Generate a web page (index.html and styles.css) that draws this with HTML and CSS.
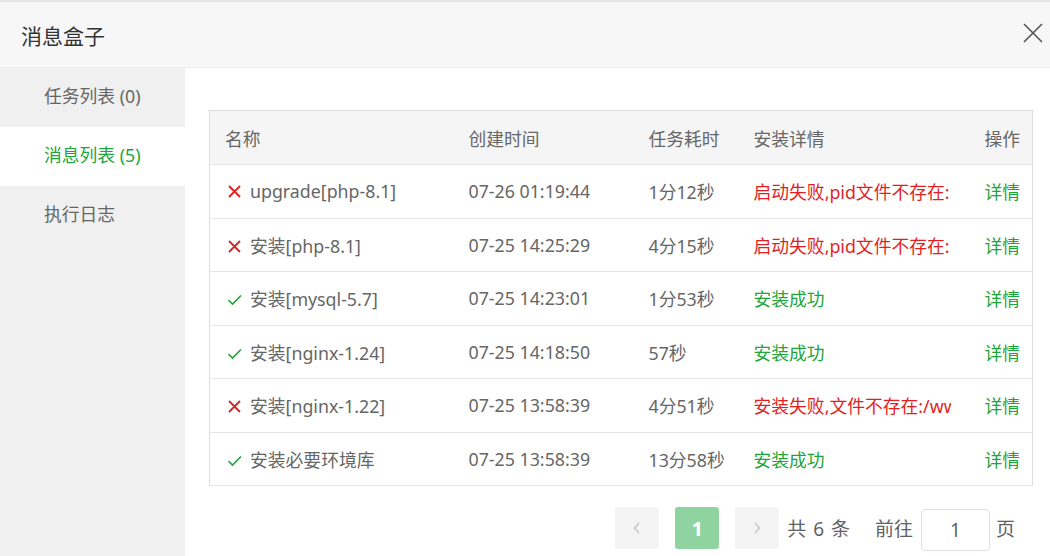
FILE: index.html
```html
<!doctype html>
<html lang="zh-CN">
    <head>
        <meta charset="UTF-8" />
        <meta name="viewport" content="width=device-width, initial-scale=1.0" />
        <title>消息盒子</title>
        <link rel="stylesheet" href="styles.css">
    </head>
    <body>
        <div class="dialog">
            <div class="header">
                <span class="title">消息盒子</span>
                <span class="close">
                    <svg width="20" height="20" viewBox="0 0 20 20"><path d="M1 1 L19 19 M19 1 L1 19" stroke="#555" stroke-width="1.6" fill="none"/></svg>
                </span>
            </div>
            <div class="main">
                <ul class="side">
                    <li>任务列表 (0)</li>
                    <li class="active">消息列表 (5)</li>
                    <li>执行日志</li>
                </ul>
                <div class="content">
                    <table class="list">
                        <colgroup>
                            <col style="width: 244px">
                            <col style="width: 180px">
                            <col style="width: 105px">
                            <col style="width: 227px">
                            <col>
                        </colgroup>
                        <thead>
                            <tr>
                                <th>名称</th>
                                <th>创建时间</th>
                                <th>任务耗时</th>
                                <th>安装详情</th>
                                <th class="op">操作</th>
                            </tr>
                        </thead>
                        <tbody>
                            <tr>
                                <td><i class="ico no"></i>upgrade[php-8.1]</td>
                                <td>07-26 01:19:44</td>
                                <td>1分12秒</td>
                                <td><div class="cut red">启动失败,pid文件不存在:</div></td>
                                <td class="op"><a>详情</a></td>
                            </tr>
                            <tr>
                                <td><i class="ico no"></i>安装[php-8.1]</td>
                                <td>07-25 14:25:29</td>
                                <td>4分15秒</td>
                                <td><div class="cut red">启动失败,pid文件不存在:</div></td>
                                <td class="op"><a>详情</a></td>
                            </tr>
                            <tr>
                                <td><i class="ico ok"></i>安装[mysql-5.7]</td>
                                <td>07-25 14:23:01</td>
                                <td>1分53秒</td>
                                <td><div class="cut green">安装成功</div></td>
                                <td class="op"><a>详情</a></td>
                            </tr>
                            <tr>
                                <td><i class="ico ok"></i>安装[nginx-1.24]</td>
                                <td>07-25 14:18:50</td>
                                <td>57秒</td>
                                <td><div class="cut green">安装成功</div></td>
                                <td class="op"><a>详情</a></td>
                            </tr>
                            <tr>
                                <td><i class="ico no"></i>安装[nginx-1.22]</td>
                                <td>07-25 13:58:39</td>
                                <td>4分51秒</td>
                                <td><div class="cut red">安装失败,文件不存在:/ww</div></td>
                                <td class="op"><a>详情</a></td>
                            </tr>
                            <tr>
                                <td><i class="ico ok"></i>安装必要环境库</td>
                                <td>07-25 13:58:39</td>
                                <td>13分58秒</td>
                                <td><div class="cut green">安装成功</div></td>
                                <td class="op"><a>详情</a></td>
                            </tr>
                        </tbody>
                    </table>

                    <div class="pager">
                        <button class="btn">
                            <svg width="10" height="14" viewBox="0 0 10 14"><path d="M7 2 L2.5 7 L7 12" stroke="#c0c4cc" stroke-width="1.4" fill="none"/></svg>
                        </button>
                        <button class="btn current">1</button>
                        <button class="btn">
                            <svg width="10" height="14" viewBox="0 0 10 14"><path d="M3 2 L7.5 7 L3 12" stroke="#c0c4cc" stroke-width="1.4" fill="none"/></svg>
                        </button>
                        <span class="total">共 6 条</span>
                        <span class="jump">前往</span>
                        <input class="page-input" value="1">
                        <span class="unit">页</span>
                    </div>
                </div>
            </div>
        </div>
    </body>
</html>
```

FILE: styles.css
```css
* {
    margin: 0;
    padding: 0;
    box-sizing: border-box;
}
body {
    width: 1050px;
    height: 556px;
    overflow: hidden;
    background: #fff;
    font-family: "Noto Sans", "Noto Sans CJK SC", sans-serif;
    color: #666;
}

.dialog {
    border-top: 2px solid #e4e4e4;
    height: 100%;
    display: flex;
    flex-direction: column;
}

.header {
    height: 66px;
    background: #f7f7f7;
    border-bottom: 1px solid #eee;
    display: flex;
    align-items: center;
    justify-content: space-between;
    padding: 0 7px 0 21px;
}
.header .title {
    font-size: 21px;
    color: #333;
}
.header .close {
    display: flex;
    width: 20px;
    height: 20px;
    margin-top: -3px;
}

.main {
    flex: 1;
    display: flex;
}

.side {
    list-style: none;
    width: 185px;
    background: #f0f0f0;
}
.side li {
    height: 59px;
    line-height: 57px;
    padding-left: 44px;
    font-size: 17.8px;
    color: #666;
}
.side li.active {
    background: #fff;
    color: #20a53a;
}

.content {
    flex: 1;
    padding: 42px 17px 0 24px;
}

.list {
    width: 824px;
    table-layout: fixed;
    border-collapse: collapse;
    border: 1px solid #ddd;
    font-size: 17.8px;
}
.list th {
    height: 54px;
    background: #f5f5f5;
    font-weight: normal;
    text-align: left;
    color: #666;
    padding-left: 15px;
    border-bottom: 1px solid #e6e6e6;
}
.list td {
    height: 53.5px;
    padding-left: 15px;
    border-bottom: 1px solid #e6e6e6;
    color: #666;
    white-space: nowrap;
}
.list .op {
    text-align: right;
    padding-right: 12px;
}
.list .op a {
    color: #20a53a;
}

.cut {
    overflow: hidden;
    white-space: nowrap;
    text-overflow: clip;
    width: 197px;
}
.red {
    color: #e21f1f;
}
.green {
    color: #20a53a;
}

.ico {
    display: inline-block;
    width: 15px;
    height: 15px;
    margin: 0 8px 0 2px;
    vertical-align: -1px;
    background-repeat: no-repeat;
}
.ico.no {
    background-image: url("data:image/svg+xml,%3Csvg xmlns='http://www.w3.org/2000/svg' viewBox='0 0 15 15'%3E%3Cpath d='M2 2 L13 13 M13 2 L2 13' stroke='%23e21f1f' stroke-width='1.8' fill='none'/%3E%3C/svg%3E");
}
.ico.ok {
    background-image: url("data:image/svg+xml,%3Csvg xmlns='http://www.w3.org/2000/svg' viewBox='0 0 15 15'%3E%3Cpath d='M1.5 8 L5.5 12 L14 3.5' stroke='%2320a53a' stroke-width='1.6' fill='none'/%3E%3C/svg%3E");
}

.pager {
    display: flex;
    align-items: center;
    justify-content: flex-end;
    padding-right: 18px;
    margin-top: 19px;
    font-size: 19px;
}
.btn {
    width: 44px;
    height: 42px;
    border: none;
    border-radius: 3px;
    background: #f4f4f5;
    display: flex;
    align-items: center;
    justify-content: center;
    margin-right: 16px;
    font-family: inherit;
}
.btn.current {
    background: #8fd3a0;
    color: #fff;
    font-size: 20px;
    font-weight: bold;
}
.pager .btn:nth-child(3) {
    margin-right: 8px;
}
.total {
    color: #606266;
    margin-right: 25px;
    word-spacing: 2px;
}
.jump {
    color: #606266;
    margin-right: 8px;
}
.page-input {
    width: 69px;
    height: 42px;
    margin-top: 4px;
    border: 1px solid #dcdfe6;
    border-radius: 4px;
    text-align: center;
    font-family: inherit;
    font-size: 19px;
    color: #606266;
    outline: none;
}
.unit {
    color: #606266;
    margin-left: 6px;
}
```
